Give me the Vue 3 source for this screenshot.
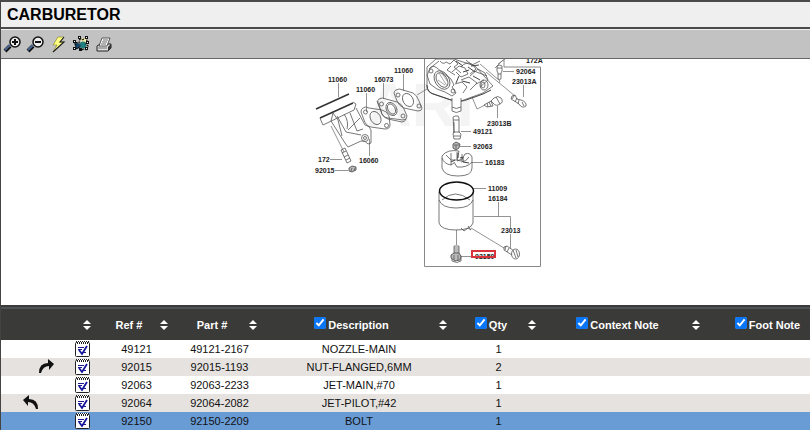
<script setup>
import { ref } from 'vue'

const rows = ref([
  { id: '49121', part: '49121-2167', desc: 'NOZZLE-MAIN', qty: 1 },
  { id: '92015', part: '92015-1193', desc: 'NUT-FLANGED,6MM', qty: 2, arrow: 'forward' },
  { id: '92063', part: '92063-2233', desc: 'JET-MAIN,#70', qty: 1 },
  { id: '92064', part: '92064-2082', desc: 'JET-PILOT,#42', qty: 1, arrow: 'back' },
  { id: '92150', part: '92150-2209', desc: 'BOLT', qty: 1 },
])
const selected = ref('92150')

const columns = ref([
  { key: 'ref', label: 'Ref #' },
  { key: 'part', label: 'Part #' },
  { key: 'desc', label: 'Description', check: true, on: true },
  { key: 'qty', label: 'Qty', check: true, on: true },
  { key: 'context', label: 'Context Note', check: true, on: true },
  { key: 'foot', label: 'Foot Note', check: true, on: true },
])

const labels = [
  { t: '11060', x: 328, y: 82 },
  { t: '11060', x: 356, y: 92 },
  { t: '16073', x: 374, y: 82 },
  { t: '11060', x: 394, y: 73 },
  { t: '172', x: 318, y: 162 },
  { t: '92015', x: 315, y: 173 },
  { t: '16060', x: 359, y: 163 },
  { t: '172A', x: 526, y: 63 },
  { t: '92064', x: 516, y: 74 },
  { t: '23013A', x: 512, y: 84 },
  { t: '23013B', x: 487, y: 126 },
  { t: '49121', x: 473, y: 134 },
  { t: '92063', x: 473, y: 149 },
  { t: '16183', x: 485, y: 165 },
  { t: '11009', x: 488, y: 191 },
  { t: '16184', x: 488, y: 201 },
  { t: '23013', x: 501, y: 233 },
]
</script>

<template>
  <main class="viewer">
    <header class="title-bar"><h1>CARBURETOR</h1></header>

    <div class="toolbar">
      <button type="button" aria-label="Zoom in">
        <svg viewBox="0 0 18 18">
          <path d="M2 16 7 11" stroke="#111" stroke-width="4" />
          <path d="M2 15 7 10" stroke="#4a6796" stroke-width="2" />
          <circle cx="12" cy="7" r="5" fill="#eee" stroke="#111" stroke-width="1.5" />
          <path d="M9 7h6M12 4v6" stroke="#111" stroke-width="2" />
        </svg>
      </button>
      <button type="button" aria-label="Zoom out">
        <svg viewBox="0 0 18 18">
          <path d="M2 16 7 11" stroke="#111" stroke-width="4" />
          <path d="M2 15 7 10" stroke="#4a6796" stroke-width="2" />
          <circle cx="12" cy="7" r="5" fill="#eee" stroke="#111" stroke-width="1.5" />
          <path d="M9 7h6" stroke="#111" stroke-width="2" />
        </svg>
      </button>
      <button type="button" aria-label="Refresh">
        <svg viewBox="0 0 18 18">
          <path d="M9 2h6l-4 5h4L4 17l4-7H4z" fill="#ffff80" stroke="#8a8a30" stroke-width=".7" />
          <path d="M15 2l-4 5h4L4 17" fill="none" stroke="#222" stroke-width="1.1" />
        </svg>
      </button>
      <button type="button" aria-label="Fit selection">
        <svg viewBox="0 0 18 18">
          <path d="M8 3h7v7h-5z" fill="#f5edaa" />
          <circle cx="11" cy="10" r="3.5" fill="#208080" />
          <path d="M2 8h4l3 2-3 4H4z" fill="#174567" />
          <path d="M8 3l2 2 4-2 1 3-1 3 2 2-1 4-3-1-3 1-1-3-5 2 1-4-2-3 5 1z" fill="none" stroke="#111" stroke-width="1.2" stroke-dasharray="2 1" />
          <g fill="#111">
            <rect x="6" y="1" width="3" height="3" /><rect x="13" y="1" width="3" height="3" />
            <rect x="1" y="5" width="3" height="3" /><rect x="14" y="6" width="3" height="3" />
            <rect x="1" y="12" width="3" height="3" /><rect x="7" y="13" width="3" height="3" />
            <rect x="13" y="12" width="3" height="3" />
          </g>
          <g fill="#fff">
            <rect x="7" y="2" width="1" height="1" /><rect x="14" y="2" width="1" height="1" />
            <rect x="2" y="6" width="1" height="1" /><rect x="15" y="7" width="1" height="1" />
            <rect x="2" y="13" width="1" height="1" /><rect x="14" y="13" width="1" height="1" />
          </g>
        </svg>
      </button>
      <button type="button" aria-label="Print">
        <svg viewBox="0 0 18 18">
          <path d="M2 11l3-2h11v4l-3 3H2z" fill="#ddd" stroke="#222" />
          <path d="M13 12l3-3v4l-3 3z" fill="#333" />
          <path d="M7 3h8l-3 8H4z" fill="#fff" stroke="#333" stroke-width=".8" />
          <path d="M8 5h5M7 7h5M6 9h5" stroke="#555" stroke-width=".9" />
          <path d="M3 13h9" stroke="#777" />
        </svg>
      </button>
    </div>

    <section class="diagram">
      <svg class="drawing" viewBox="0 59 810 246" role="img" aria-label="Carburetor exploded view">
        <text class="watermark" x="367" y="126">ARI</text>
        <g class="frame"><path d="M424.500 59V266.500H540.500V67H504V59" /></g>

        <!-- leader lines -->
        <g class="leader">
          <path d="M338.500 83V97M366.500 93V112M383.500 83V99M403.500 74V91M369.500 156V139M330 159.500H342M335 170.500H348" />
          <path d="M417 95 437 83M331 126 344 152M503 71.500H514M523.500 85V97M497.500 118V106M461 131.500H471M460 146.500H471M471 162.500H483M473 188.500H486" />
          <path d="M498.500 202V216.500M474 216.500H510.500M510.500 216.500V228M510.500 234V248M471 228 504 248M456.500 228V245M461 256.500H472" />
          <path d="M480 64 500 81 499 83M486 72 515 96M470 92 477 109 485 105M495 68 503 60M498 64 505 59" />
        </g>

        <g class="parts">
          <!-- gaskets -->
          <path d="M363 108q2-2 6 0l13 2q5 1 7 6l1 9q0 4-5 4l-14-2q-5-1-7-7l-3-8q0-3 2-4z" />
          <ellipse cx="375.500" cy="118" rx="5" ry="7" transform="rotate(-30 375.500 118)" />
          <circle cx="365.500" cy="112" r="2" /><circle cx="386.500" cy="125.500" r="2" />
          <path d="M379 99q3-2 7 0l11 3q5 2 7 7l3 7q0 4-4 4l-15-2q-6-1-7-7l-3-8q-1-3 1-4z" />
          <path d="M377 101l4 10q1 6 7 8l14 3q3 0 4-3" />
          <ellipse cx="391.500" cy="109" rx="5" ry="7" transform="rotate(-30 391.500 109)" />
          <ellipse cx="391.500" cy="109" rx="3.500" ry="5.500" transform="rotate(-30 391.500 109)" />
          <circle cx="381.500" cy="104" r="2" /><circle cx="403" cy="116" r="2" />
          <path d="M396 90q3-2 7 0l10 3q4 2 6 8l3 7q0 3-4 3l-14-3q-5-2-7-7l-3-8q0-2 2-3z" />
          <ellipse cx="408" cy="100" rx="5" ry="7" transform="rotate(-30 408 100)" />
          <circle cx="398" cy="95" r="2" /><circle cx="419" cy="106" r="2" />

          <!-- intake manifold -->
          <path class="thick" d="M316 109 349 94M320 118 353 103" />
          <path d="M320 118l2 5 1 2 31-15 2-6-3-2M331 121l14 22 3 4 13-6q4-1 7 3l3-1V130q-1-4-6-5l-9-17M331 121l2-8 5 7 4 16M344 114q5 7 3 15M348 130l12-12M350 113l7 18 6-2M337 116l9 16 15 3" />
          <circle cx="365" cy="138" r="3.500" /><circle cx="365" cy="138" r="1.500" />
          <path d="M341 150l4-2 6 13-4 2zM342 153l4-2M344 157l4-2M346 160l4-2" />
          <path class="nut" d="M349 168l3-2 4 1v3l-4 2-3-1z" /><path d="M352 168l-1 3M355 168l-1 3" />

          <!-- carburetor body -->
          <path class="white" d="M427 83q-1 8 4 10l23 8h7l22-8 10-7-18-20-21-7h-18l-9 8z" />
          <path d="M431 67q3-2 6 1l6 5 8 6 3 6-2 2 4 6-4 3-7-4-8-3-7-5-3-9z" />
          <ellipse cx="442" cy="80" rx="7" ry="10" transform="rotate(-32 442 80)" />
          <ellipse cx="442" cy="80" rx="5" ry="8" transform="rotate(-32 442 80)" />
          <path class="fine" d="M439 73l8 13M442 73l5 8M438 80l7 5" />
          <circle cx="431" cy="71" r="2" /><circle cx="453" cy="91" r="2" />
          <path class="medium" d="M427 85q0 8 9 10l15 5q9 3 18-1l14-5 8-4" />
          <path d="M429 69l10-8M440 61q3 4 6 1l4 2 4-4 4 4-4 3 7 6M451 66l-4 4 8 5M452 72l7-6 6 2 3 6-7 3-5-5M461 67q5-6 11-3l4 5-6 5M466 60l6 5 8-4M470 76l8-7 7 4 3 7-8 7M461 80l8-3 8 6-7 7M455 84l7-2 5 5-4 6M474 71l13 5M476 84l8-4" />
          <path class="medium" d="M456 61l7 5M463 72l6-2M468 67l7 5M459 76l-3 7M473 76l7 4M462 81l8 2M471 66l8-1" />
          <ellipse cx="484" cy="85" rx="4" ry="5" /><ellipse cx="483" cy="85" rx="2" ry="3" />
          <path class="white" d="M452 98v13q4 3 9 0V98" /><path d="M452 107q4 3 9 0" />

          <!-- jets and screws -->
          <path d="M497 66q3-2 5 0v5l-1 2v6q-2 1-3 0v-6l-1-2zM497 68h5M498 74h3" />
          <path d="M512 96l3-1 2 4 4 1q6 2 5 6-4 3-7-2l-3-2-5-3zM514 96l-2 3M517 98l-2 4M519 100l-1 4M522 102l2 4" />
          <path d="M484 105l7-4 2 5-6 1zM487 103l1 4M489 102l2 4M491 101l3-3q4-3 7 0 3 4-1 6-4 3-7-1zM496 97l4 7" />
          <path d="M453 117l2-1h3l1 2v14l2 2-1 5h-6l-1-5 1-2zM453 120h6M453 132h7M454 136h6M454 122v11" />
          <path class="nut" d="M453 144l3-2 4 2-1 4-3 2-3-2z" /><path d="M454 145h5M456 145v4" />

          <!-- float -->
          <path class="white" d="M442 156v12q2 8 16 8t14-8v-11q-2-5-7-3l-4 7-4-1 2-9q-12-2-17 5z" />
          <path d="M442 158q2 6 9 7l3-2M451 153v7h5M457 152v9l5-2v-5M461 162q5 0 8-5M454 162l3 5q10 1 15-5M446 155l5 5v5" />
          <path class="medium" d="M451 162l4-2M460 158l3-1v5l6 1M458 153v5" />

          <!-- bowl and o-ring -->
          <path class="white" d="M439 192v31q2 7 17 7t17-7v-31" />
          <path d="M439 200q3 8 17 8t17-8M442 200q13-12 28 0M461 228l3 3 4-3 3 2-3-4" />
          <ellipse class="oring" cx="456.500" cy="191" rx="17" ry="9" />

          <!-- drain bolt and screw -->
          <path d="M454 246h5v8l2 2v5q-4 3-9 0v-5l2-2zM454 248h5M454 250h5M454 252h5" />
          <path class="nut" d="M451 255l3-2h5l2 3-1 4-5 1-4-3z" /><path d="M454 255v5M458 255v5" />
          <path d="M504 247l3-1 7 5-2 4-8-5zM506 246l-1 4M509 248l-2 4" />
          <ellipse class="white" cx="515.500" cy="254" rx="4" ry="5" /><path d="M513 250l3 8M516 250l2 7" />
        </g>

        <g class="callouts">
          <text v-for="(l, i) in labels" :key="i" :x="l.x" :y="l.y">{{ l.t }}</text>
          <text x="475" y="259">92150</text>
        </g>
        <rect class="highlight" x="472" y="251" width="23" height="6" />
      </svg>
    </section>

    <section class="list">
      <table>
        <colgroup>
          <col class="c-nav" /><col class="c-icon" /><col class="c-ref" /><col class="c-part" />
          <col class="c-desc" /><col class="c-qty" /><col class="c-context" /><col />
        </colgroup>
        <thead>
          <tr>
            <th></th>
            <th>
              <div class="head">
                <span class="caption"></span>
                <svg class="sort" viewBox="0 0 8 10"><path d="M0 4 4 0l4 4zM0 6h8l-4 4z" /></svg>
              </div>
            </th>
            <th v-for="c in columns" :key="c.key" scope="col">
              <div class="head">
                <label v-if="c.check" class="caption">
                  <input v-model="c.on" type="checkbox" /><span>{{ c.label }}</span>
                </label>
                <span v-else class="caption">{{ c.label }}</span>
                <svg class="sort" viewBox="0 0 8 10"><path d="M0 4 4 0l4 4zM0 6h8l-4 4z" /></svg>
              </div>
            </th>
          </tr>
        </thead>
        <tbody>
          <tr v-for="r in rows" :key="r.id" :class="{ selected: r.id === selected }" @click="selected = r.id">
            <td>
              <div class="nav">
                <svg v-if="r.arrow" class="arrow" :class="r.arrow" viewBox="0 0 16 16">
                  <path d="M0 14Q0 4 9 4V0l6 5-5 6V7Q4 7 2 14z" />
                </svg>
              </div>
            </td>
            <td>
              <svg class="note" viewBox="0 0 15 16">
                <rect x=".5" y="1.500" width="14" height="14" rx="1" fill="#fff" stroke="#222" />
                <path d="M2 1h11" stroke="#fff" stroke-width="2" />
                <path d="M1 .5h13M2 2.500h12" stroke="#222" stroke-dasharray="1 1" />
                <path d="M2 1.500h12" stroke="#222" stroke-dasharray="1 1" />
                <path d="M3 6.500h6M3 8.500h4M8 11.500h3" stroke="#1c1c90" />
                <path d="M4 9l3 4 5-8" fill="none" stroke="#14149a" stroke-width="1.800" />
              </svg>
            </td>
            <td>{{ r.id }}</td>
            <td>{{ r.part }}</td>
            <td>{{ r.desc }}</td>
            <td>{{ r.qty }}</td>
            <td></td>
            <td></td>
          </tr>
        </tbody>
      </table>
    </section>
  </main>
</template>

<style>
body {
  margin: 0;
  background: #fff;
}
</style>

<style scoped>
.viewer {
  border-left: 1px solid #444;
  border-top: 2px solid #4a4a4d;
  font-family: "Liberation Sans", Arial, sans-serif;
  font-size: 11px;
  color: #111;
  overflow: hidden;
}
.title-bar {
  background: #efefef;
  border-bottom: 2px solid #4a4a4d;
  padding: 0 6px;
}
h1 {
  margin: 0;
  font-size: 16px;
  line-height: 25px;
  font-weight: bold;
  color: #000;
}
.toolbar {
  display: flex;
  align-items: center;
  gap: 5px;
  padding: 5px 2px;
  background: #c3c2c3;
  border-top: 1px solid #eee;
  border-bottom: 1px solid #666;
}
.toolbar button {
  width: 18px;
  height: 18px;
  padding: 0;
  border: 0;
  background: none;
}
.toolbar svg {
  display: block;
  width: 18px;
  height: 18px;
  fill: none;
}
.diagram {
  display: flex;
  justify-content: center;
  padding-right: 1px;
}
.drawing {
  display: block;
  flex: none;
  width: 810px;
  height: 246px;
}
.watermark {
  font-size: 62px;
  font-weight: bold;
  fill: #f4f4f4;
}
.frame,
.leader,
.parts {
  fill: none;
  stroke-linejoin: round;
}
.frame {
  stroke: #888;
}
.leader {
  stroke: #666;
  stroke-width: 0.7;
}
.parts {
  stroke: #555;
  stroke-width: 0.8;
}
.parts .white {
  fill: #fff;
}
.parts .fine {
  stroke-width: 0.5;
}
.parts .medium {
  stroke: #444;
  stroke-width: 1;
}
.parts .thick {
  stroke: #333;
  stroke-width: 1.6;
}
.parts .nut {
  fill: #bbb;
  stroke: #444;
}
.parts .oring {
  stroke: #111;
  stroke-width: 1.5;
}
.callouts {
  font-size: 7px;
  font-weight: bold;
  fill: #222;
}
.highlight {
  fill: none;
  stroke: #d9343c;
  stroke-width: 2;
}
.list {
  border-top: 2px solid #3a3b3b;
  overflow: hidden;
}
table {
  width: 100%;
  min-width: 842px;
  table-layout: fixed;
  border-collapse: collapse;
}
.c-nav { width: 66px; }
.c-icon { width: 31px; }
.c-ref { width: 77px; }
.c-part { width: 89px; }
.c-desc { width: 190px; }
.c-qty { width: 89px; }
.c-context { width: 164px; }
thead {
  background: #3a3a38;
  border-top: 2px solid #505355;
  color: #fff;
}
th,
td {
  padding: 0;
  text-align: center;
}
.head {
  display: flex;
  align-items: center;
  height: 31px;
  padding-right: 7px;
}
.caption {
  flex: 1;
  display: flex;
  justify-content: center;
  align-items: center;
  gap: 2px;
  white-space: nowrap;
}
.caption input {
  width: 12px;
  height: 12px;
  margin: 0 0 4px;
  accent-color: #0a75f5;
}
.sort {
  flex: none;
  width: 8px;
  height: 10px;
  fill: #fff;
}
td {
  height: 18px;
  line-height: 18px;
  white-space: nowrap;
}
tbody tr:nth-child(even) {
  background: #e6e2df;
}
tbody tr.selected {
  background: #699bd5;
}
.nav {
  display: flex;
  padding: 0 12px 0 21px;
}
.arrow {
  width: 16px;
  height: 16px;
  fill: #111;
}
.arrow.forward {
  margin-left: auto;
}
.arrow.back {
  transform: scaleX(-1);
}
.note {
  display: block;
  width: 15px;
  height: 16px;
  margin: 0 auto;
}
</style>
